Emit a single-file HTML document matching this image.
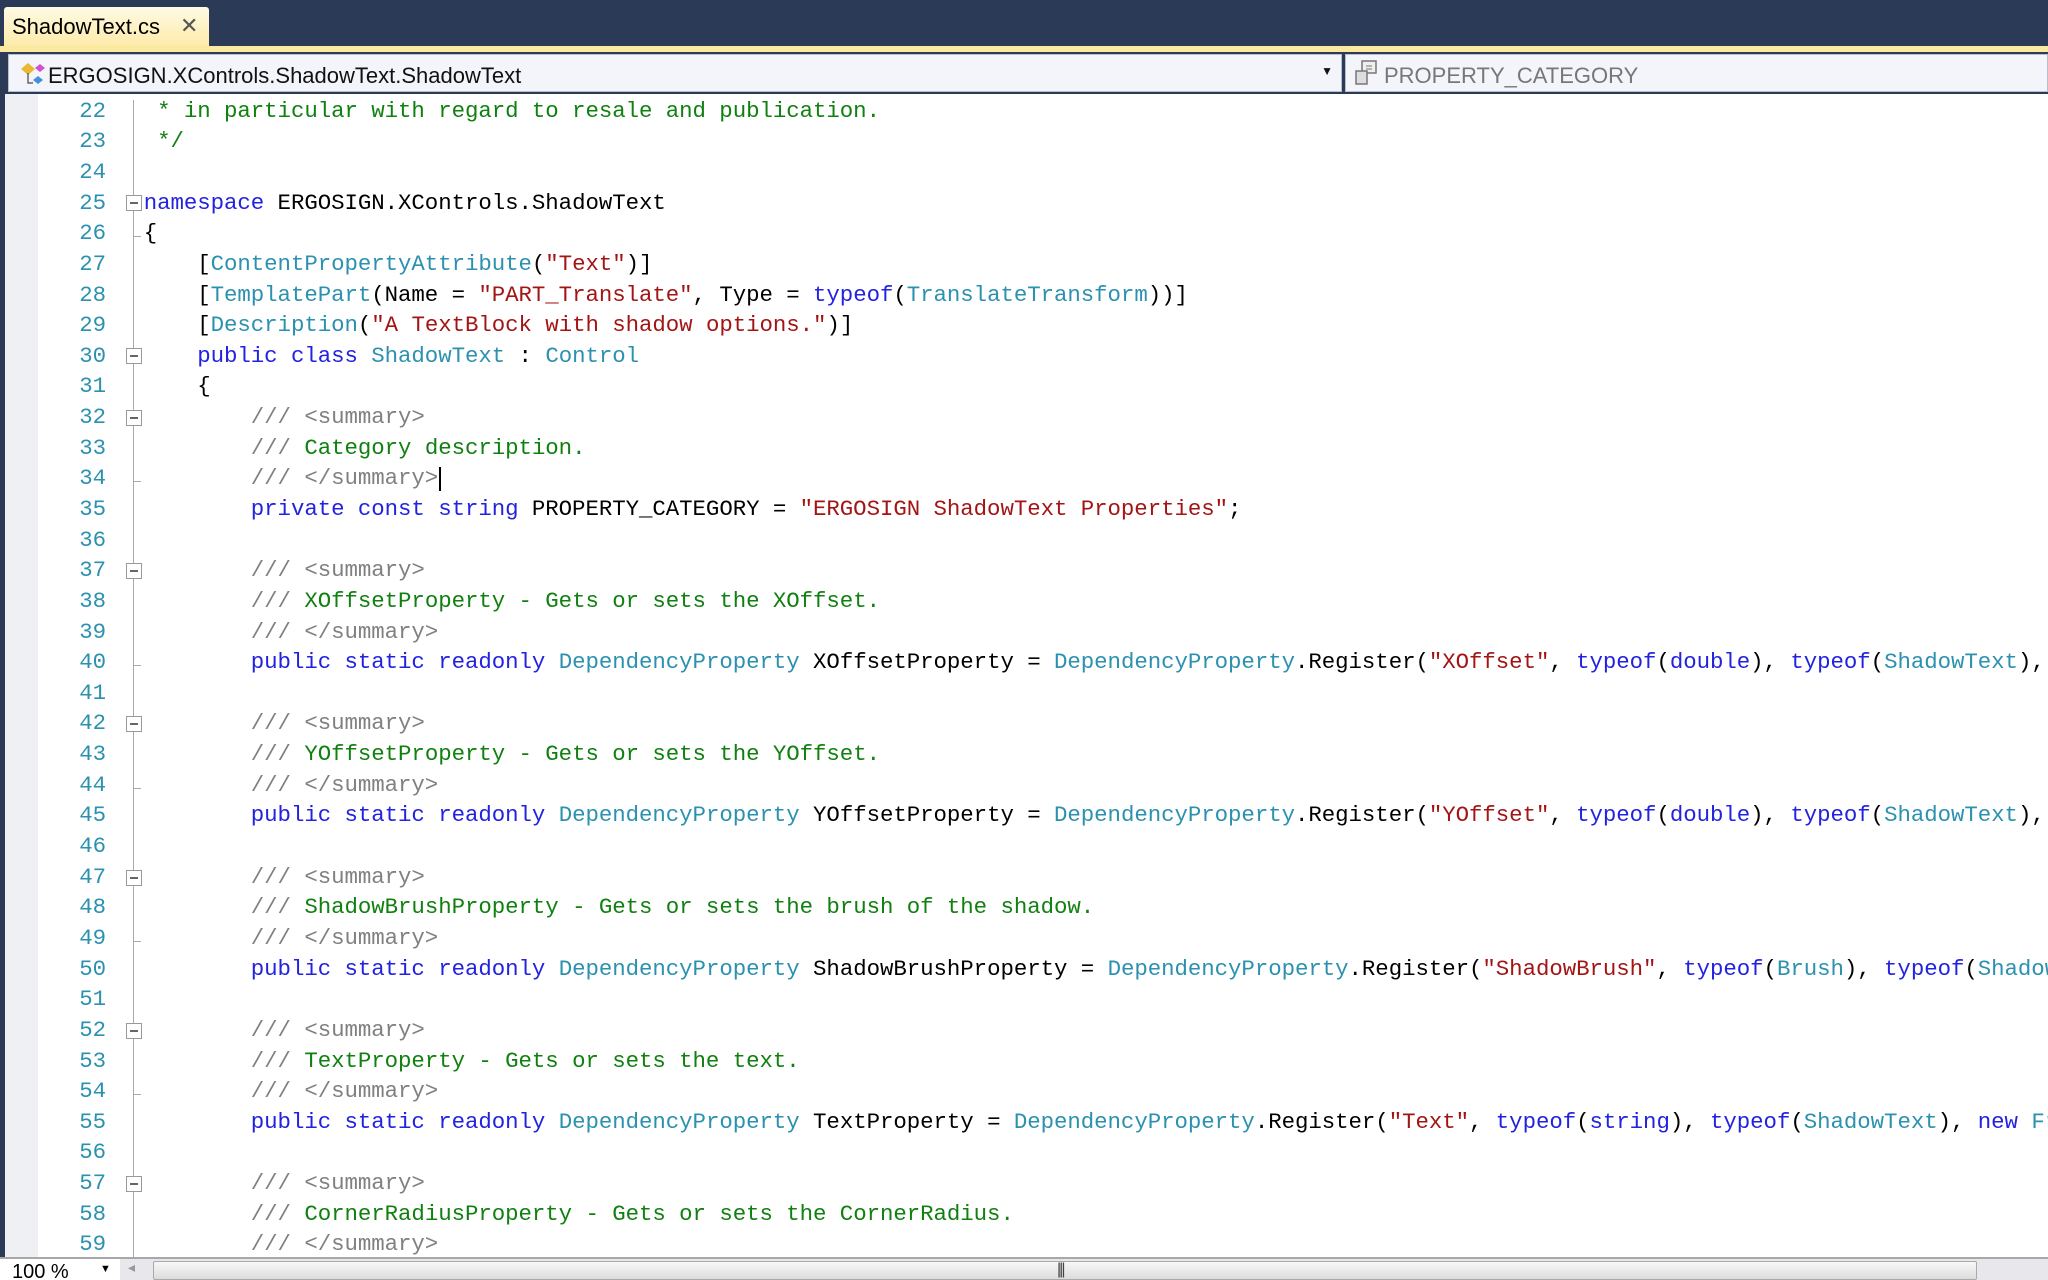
<!DOCTYPE html>
<html><head><meta charset="utf-8"><style>
*{margin:0;padding:0;box-sizing:border-box}
html,body{width:2048px;height:1280px;overflow:hidden}
body{background:#fff;position:relative;font-family:"Liberation Sans",sans-serif}
#top{position:absolute;left:0;top:0;width:2048px;height:48px;background:#2b3a56}
#tab{position:absolute;left:4px;top:7px;width:205px;height:42px;background:linear-gradient(#fffbe4,#fde9a6);border-radius:3px 3px 0 0;font-size:22px;color:#000;padding:7px 0 0 8px}
#tab .x{position:absolute;left:176px;top:6px;font-size:22px;color:#555}
#yb{position:absolute;left:0;top:46px;width:2048px;height:8px;background:#fbe9a0}
#nav{position:absolute;left:0;top:52px;width:2048px;height:42px;background:#2b3a56;overflow:hidden}
.combo{position:absolute;top:2px;height:38px;background:#f3f5fa;border:1px solid #b8bfcc;font-size:22px;padding:8px 0 0 0}
#c1{left:8px;width:1334px;color:#111}
#c2{left:1345px;width:703px;color:#777}
#editor{position:absolute;left:0;top:94px;width:2048px;height:1164px;background:#fff;border-left:5px solid #2b3a56}
#strip{position:absolute;left:5px;top:94px;width:33px;height:1164px;background:#eef0f4}
#lines{position:absolute;left:0;top:95.7px;width:2048px;height:1161px;overflow:hidden;font-family:"Liberation Mono",monospace;font-size:22.4px;line-height:30.64px;white-space:pre;letter-spacing:-0.05px}
.ln{position:absolute;left:40px;width:66px;text-align:right;color:#2b91af}
.cd{position:absolute;left:143.7px;color:#000}
.k{color:#2222e0}.t{color:#2b91af}.s{color:#a31515}.c{color:#108010}.g{color:#808080}
.fold{position:absolute;left:126px;width:16px;height:16px;border:1px solid #999;background:#fff}
.fold:after{content:"";position:absolute;left:3px;top:6px;width:8px;height:2px;background:#666}
.vl{position:absolute;left:133px;width:1px;background:#aaa}
.tick{position:absolute;left:133px;width:8px;height:1px;background:#aaa}
#cursor{position:absolute;width:2px;height:24px;background:#000}
#bottom{position:absolute;left:0;top:1257px;width:2048px;height:23px;background:#e8e8ec;border-top:2px solid #a8a8a8;overflow:hidden}
#zoom{position:absolute;left:0;top:0;width:120px;height:23px;background:#fff;font-size:20px;padding:2px 0 0 12px}
#thumb{position:absolute;left:153px;top:2px;width:1824px;height:19px;background:linear-gradient(#f8f8f8,#dcdcdc);border:1px solid #aaa;border-radius:2px}
</style></head><body>
<div id="top"><div id="tab">ShadowText.cs<span class="x">✕</span></div></div>
<div id="yb"></div>
<div id="nav">
<div class="combo" id="c1"><svg width="32" height="28" style="position:absolute;left:8px;top:5px" viewBox="0 0 32 28"><path d="M4 9l7-6 7 6-7 6z" fill="#e8b830"/><path d="M18 8l5-4 5 4-5 4z" fill="#d050d0"/><path d="M16 20l5-4 5 4-5 4z" fill="#4090e0"/><path d="M11 13v10h5" stroke="#666" fill="none" stroke-width="1.5"/></svg><span style="position:absolute;left:39px;top:8px">ERGOSIGN.XControls.ShadowText.ShadowText</span><span style="position:absolute;right:8px;top:9px;font-size:12px">▼</span></div>
<div class="combo" id="c2"><svg width="28" height="30" style="position:absolute;left:7px;top:3px" viewBox="0 0 28 30"><rect x="9" y="3" width="14" height="12" fill="#eee" stroke="#777" stroke-width="1.5"/><rect x="3" y="13" width="11" height="13" fill="#ddd" stroke="#777" stroke-width="1.5"/><path d="M13 8h6M13 11h6" stroke="#777"/></svg><span style="position:absolute;left:38px;top:8px">PROPERTY_CATEGORY</span></div>
</div>
<div id="editor"></div>
<div id="strip"></div>
<div class="vl" style="top:100px;height:136px"></div><div class="tick" style="top:236px"></div>
<div class="vl" style="top:211px;height:1046px"></div>
<div class="tick" style="top:481px"></div><div class="tick" style="top:665px"></div><div class="tick" style="top:788px"></div><div class="tick" style="top:941px"></div><div class="tick" style="top:1094px"></div>
<div class="fold" style="top:195px"></div>
<div class="fold" style="top:348px"></div>
<div class="fold" style="top:410px"></div>
<div class="fold" style="top:563px"></div>
<div class="fold" style="top:716px"></div>
<div class="fold" style="top:870px"></div>
<div class="fold" style="top:1023px"></div>
<div class="fold" style="top:1176px"></div>
<div id="lines">
<div class="ln" style="top:0">22</div><div class="cd" style="top:0"><span class="c"> * in particular with regard to resale and publication.</span></div>
<div class="ln" style="top:30.64px">23</div><div class="cd" style="top:30.64px"><span class="c"> */</span></div>
<div class="ln" style="top:61.28px">24</div>
<div class="ln" style="top:91.92px">25</div><div class="cd" style="top:91.92px"><span class="k">namespace</span> ERGOSIGN.XControls.ShadowText</div>
<div class="ln" style="top:122.56px">26</div><div class="cd" style="top:122.56px">{</div>
<div class="ln" style="top:153.2px">27</div><div class="cd" style="top:153.2px">    [<span class="t">ContentPropertyAttribute</span>(<span class="s">"Text"</span>)]</div>
<div class="ln" style="top:183.84px">28</div><div class="cd" style="top:183.84px">    [<span class="t">TemplatePart</span>(Name = <span class="s">"PART_Translate"</span>, Type = <span class="k">typeof</span>(<span class="t">TranslateTransform</span>))]</div>
<div class="ln" style="top:214.48px">29</div><div class="cd" style="top:214.48px">    [<span class="t">Description</span>(<span class="s">"A TextBlock with shadow options."</span>)]</div>
<div class="ln" style="top:245.12px">30</div><div class="cd" style="top:245.12px">    <span class="k">public class</span> <span class="t">ShadowText</span> : <span class="t">Control</span></div>
<div class="ln" style="top:275.76px">31</div><div class="cd" style="top:275.76px">    {</div>
<div class="ln" style="top:306.4px">32</div><div class="cd" style="top:306.4px">        <span class="g">/// &lt;summary&gt;</span></div>
<div class="ln" style="top:337.04px">33</div><div class="cd" style="top:337.04px">        <span class="g">///</span><span class="c"> Category description.</span></div>
<div class="ln" style="top:367.68px">34</div><div class="cd" style="top:367.68px">        <span class="g">/// &lt;/summary&gt;</span></div>
<div class="ln" style="top:398.32px">35</div><div class="cd" style="top:398.32px">        <span class="k">private const string</span> PROPERTY_CATEGORY = <span class="s">"ERGOSIGN ShadowText Properties"</span>;</div>
<div class="ln" style="top:428.96px">36</div>
<div class="ln" style="top:459.6px">37</div><div class="cd" style="top:459.6px">        <span class="g">/// &lt;summary&gt;</span></div>
<div class="ln" style="top:490.24px">38</div><div class="cd" style="top:490.24px">        <span class="g">///</span><span class="c"> XOffsetProperty - Gets or sets the XOffset.</span></div>
<div class="ln" style="top:520.88px">39</div><div class="cd" style="top:520.88px">        <span class="g">/// &lt;/summary&gt;</span></div>
<div class="ln" style="top:551.52px">40</div><div class="cd" style="top:551.52px">        <span class="k">public static readonly</span> <span class="t">DependencyProperty</span> XOffsetProperty = <span class="t">DependencyProperty</span>.Register(<span class="s">"XOffset"</span>, <span class="k">typeof</span>(<span class="k">double</span>), <span class="k">typeof</span>(<span class="t">ShadowText</span>),</div>
<div class="ln" style="top:582.16px">41</div>
<div class="ln" style="top:612.8px">42</div><div class="cd" style="top:612.8px">        <span class="g">/// &lt;summary&gt;</span></div>
<div class="ln" style="top:643.44px">43</div><div class="cd" style="top:643.44px">        <span class="g">///</span><span class="c"> YOffsetProperty - Gets or sets the YOffset.</span></div>
<div class="ln" style="top:674.08px">44</div><div class="cd" style="top:674.08px">        <span class="g">/// &lt;/summary&gt;</span></div>
<div class="ln" style="top:704.72px">45</div><div class="cd" style="top:704.72px">        <span class="k">public static readonly</span> <span class="t">DependencyProperty</span> YOffsetProperty = <span class="t">DependencyProperty</span>.Register(<span class="s">"YOffset"</span>, <span class="k">typeof</span>(<span class="k">double</span>), <span class="k">typeof</span>(<span class="t">ShadowText</span>),</div>
<div class="ln" style="top:735.36px">46</div>
<div class="ln" style="top:766px">47</div><div class="cd" style="top:766px">        <span class="g">/// &lt;summary&gt;</span></div>
<div class="ln" style="top:796.64px">48</div><div class="cd" style="top:796.64px">        <span class="g">///</span><span class="c"> ShadowBrushProperty - Gets or sets the brush of the shadow.</span></div>
<div class="ln" style="top:827.28px">49</div><div class="cd" style="top:827.28px">        <span class="g">/// &lt;/summary&gt;</span></div>
<div class="ln" style="top:857.92px">50</div><div class="cd" style="top:857.92px">        <span class="k">public static readonly</span> <span class="t">DependencyProperty</span> ShadowBrushProperty = <span class="t">DependencyProperty</span>.Register(<span class="s">"ShadowBrush"</span>, <span class="k">typeof</span>(<span class="t">Brush</span>), <span class="k">typeof</span>(<span class="t">ShadowText</span>),</div>
<div class="ln" style="top:888.56px">51</div>
<div class="ln" style="top:919.2px">52</div><div class="cd" style="top:919.2px">        <span class="g">/// &lt;summary&gt;</span></div>
<div class="ln" style="top:949.84px">53</div><div class="cd" style="top:949.84px">        <span class="g">///</span><span class="c"> TextProperty - Gets or sets the text.</span></div>
<div class="ln" style="top:980.48px">54</div><div class="cd" style="top:980.48px">        <span class="g">/// &lt;/summary&gt;</span></div>
<div class="ln" style="top:1011.12px">55</div><div class="cd" style="top:1011.12px">        <span class="k">public static readonly</span> <span class="t">DependencyProperty</span> TextProperty = <span class="t">DependencyProperty</span>.Register(<span class="s">"Text"</span>, <span class="k">typeof</span>(<span class="k">string</span>), <span class="k">typeof</span>(<span class="t">ShadowText</span>), <span class="k">new</span> <span class="t">Fr</span></div>
<div class="ln" style="top:1041.76px">56</div>
<div class="ln" style="top:1072.4px">57</div><div class="cd" style="top:1072.4px">        <span class="g">/// &lt;summary&gt;</span></div>
<div class="ln" style="top:1103.04px">58</div><div class="cd" style="top:1103.04px">        <span class="g">///</span><span class="c"> CornerRadiusProperty - Gets or sets the CornerRadius.</span></div>
<div class="ln" style="top:1133.68px">59</div><div class="cd" style="top:1133.68px">        <span class="g">/// &lt;/summary&gt;</span></div>
</div>
<div id="cursor" style="left:439px;top:467px"></div>
<div id="bottom"><div id="zoom">100 %<span style="position:absolute;left:100px;top:4px;font-size:11px">▼</span></div><span style="position:absolute;left:128px;top:0;font-size:14px;color:#999">◂</span><div id="thumb"><span style="position:absolute;left:903px;top:-1px;font-size:16px;letter-spacing:-2px;color:#444">|||</span></div></div>
</body></html>
